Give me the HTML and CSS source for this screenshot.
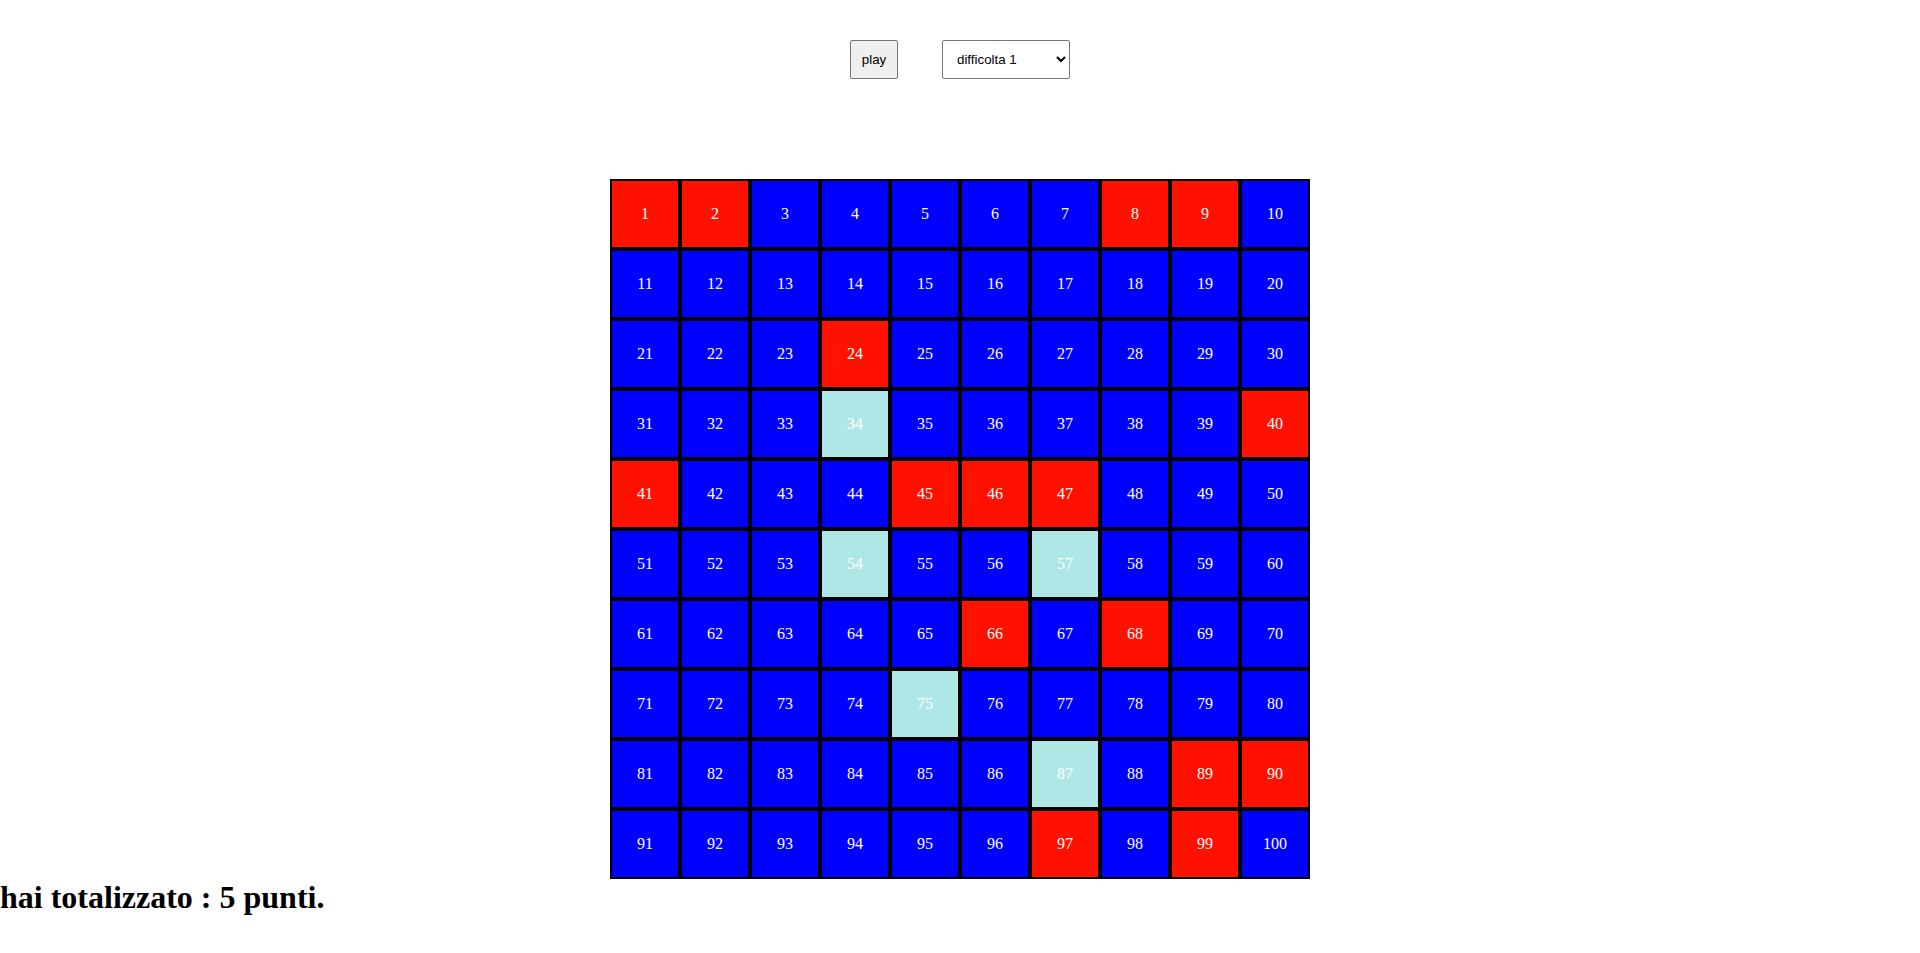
FILE: index.html
```html
<!DOCTYPE html>
<html lang="it">
<head>
<meta charset="utf-8">
<title>Campo minato</title>
<link rel="stylesheet" href="styles.css">
</head>
<body>
<div class="controls">
  <button class="play-btn">play</button>
  <select class="level">
    <option>difficolta 1</option>
    <option>difficolta 2</option>
    <option>difficolta 3</option>
  </select>
</div>
<div class="board">
  <div class="cell bomb">1</div><div class="cell bomb">2</div><div class="cell">3</div><div class="cell">4</div><div class="cell">5</div><div class="cell">6</div><div class="cell">7</div><div class="cell bomb">8</div><div class="cell bomb">9</div><div class="cell">10</div>
  <div class="cell">11</div><div class="cell">12</div><div class="cell">13</div><div class="cell">14</div><div class="cell">15</div><div class="cell">16</div><div class="cell">17</div><div class="cell">18</div><div class="cell">19</div><div class="cell">20</div>
  <div class="cell">21</div><div class="cell">22</div><div class="cell">23</div><div class="cell bomb">24</div><div class="cell">25</div><div class="cell">26</div><div class="cell">27</div><div class="cell">28</div><div class="cell">29</div><div class="cell">30</div>
  <div class="cell">31</div><div class="cell">32</div><div class="cell">33</div><div class="cell safe">34</div><div class="cell">35</div><div class="cell">36</div><div class="cell">37</div><div class="cell">38</div><div class="cell">39</div><div class="cell bomb">40</div>
  <div class="cell bomb">41</div><div class="cell">42</div><div class="cell">43</div><div class="cell">44</div><div class="cell bomb">45</div><div class="cell bomb">46</div><div class="cell bomb">47</div><div class="cell">48</div><div class="cell">49</div><div class="cell">50</div>
  <div class="cell">51</div><div class="cell">52</div><div class="cell">53</div><div class="cell safe">54</div><div class="cell">55</div><div class="cell">56</div><div class="cell safe">57</div><div class="cell">58</div><div class="cell">59</div><div class="cell">60</div>
  <div class="cell">61</div><div class="cell">62</div><div class="cell">63</div><div class="cell">64</div><div class="cell">65</div><div class="cell bomb">66</div><div class="cell">67</div><div class="cell bomb">68</div><div class="cell">69</div><div class="cell">70</div>
  <div class="cell">71</div><div class="cell">72</div><div class="cell">73</div><div class="cell">74</div><div class="cell safe">75</div><div class="cell">76</div><div class="cell">77</div><div class="cell">78</div><div class="cell">79</div><div class="cell">80</div>
  <div class="cell">81</div><div class="cell">82</div><div class="cell">83</div><div class="cell">84</div><div class="cell">85</div><div class="cell">86</div><div class="cell safe">87</div><div class="cell">88</div><div class="cell bomb">89</div><div class="cell bomb">90</div>
  <div class="cell">91</div><div class="cell">92</div><div class="cell">93</div><div class="cell">94</div><div class="cell">95</div><div class="cell">96</div><div class="cell bomb">97</div><div class="cell">98</div><div class="cell bomb">99</div><div class="cell">100</div>
</div>
<h1 class="score">hai totalizzato : 5 punti.</h1>
</body>
</html>
```

FILE: styles.css
```css
html, body {
  margin: 0;
  padding: 0;
  background: #ffffff;
  font-family: "Liberation Serif", "Times New Roman", serif;
}

.controls {
  display: flex;
  justify-content: center;
  align-items: flex-start;
  gap: 44px;
  padding-top: 40px;
}

.play-btn {
  box-sizing: border-box;
  width: 48px;
  height: 39px;
  padding: 0;
  font-family: "Liberation Sans", Arial, sans-serif;
  font-size: 13.33px;
  color: #000;
  background: #efefef;
  border: 1px solid #767676;
  border-radius: 2px;
}

.level {
  box-sizing: border-box;
  width: 128px;
  height: 39px;
  padding: 0 8px 0 10px;
  font-family: "Liberation Sans", Arial, sans-serif;
  font-size: 13.33px;
  color: #000;
  background: #fff;
  border: 1px solid #767676;
  border-radius: 2px;
}

.board {
  display: grid;
  grid-template-columns: repeat(10, 70px);
  grid-auto-rows: 70px;
  width: 700px;
  margin: 100px auto 0;
}

.cell {
  box-sizing: border-box;
  border: 2px solid #000;
  background: #0000ff;
  color: #ffffff;
  font-size: 16px;
  display: flex;
  align-items: center;
  justify-content: center;
}

.cell.bomb {
  background: #ff1100;
}

.cell.safe {
  background: #afe7e6;
}

.score {
  margin: 0;
  font-size: 32px;
  font-weight: bold;
  color: #000;
}
```
